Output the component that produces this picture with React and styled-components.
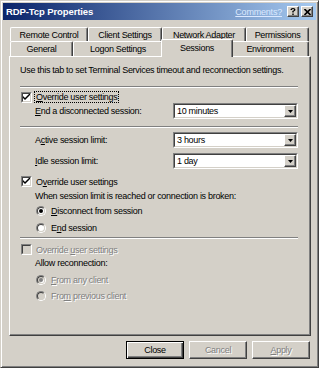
import React from 'react';
import styled, { createGlobalStyle, css } from 'styled-components';

const GlobalStyle = createGlobalStyle`
  html, body { margin: 0; padding: 0; background: #d4d0c8; }
  body { font-family: "Liberation Sans", Arial, sans-serif; }
`;

const raised = css`
  border: 1px solid;
  border-color: #fff #404040 #404040 #fff;
  box-shadow: inset -1px -1px 0 #808080;
`;

const Window = styled.div`
  width: 319px;
  height: 368px;
  box-sizing: border-box;
  background: #d4d0c8;
  border: 1px solid;
  border-color: #d4d0c8 #404040 #404040 #d4d0c8;
  box-shadow: inset 1px 1px 0 #fff, inset -1px -1px 0 #808080;
  padding: 2px;
  display: flex;
  flex-direction: column;
  font-size: 9px;
  letter-spacing: -0.3px;
  color: #000;
`;

const TitleBar = styled.div`
  height: 17px;
  display: flex;
  align-items: center;
  padding: 0 3px 0 3px;
  background: linear-gradient(to right, #0a246a, #a6caf0);
`;

const Title = styled.div`
  flex: 1;
  color: #fff;
  font-weight: bold;
  font-size: 9.5px;
  letter-spacing: -0.1px;
`;

const HelpLink = styled.span`
  color: #dbe9ff;
  text-decoration: underline;
  margin-right: 5px;
  letter-spacing: -0.2px;
`;

const CaptionButton = styled.div`
  ${raised};
  width: 12px;
  height: 11px;
  box-sizing: border-box;
  background: #d4d0c8;
  display: flex;
  align-items: center;
  justify-content: center;
  margin-left: ${p => p.gap || 0}px;
`;

const Body = styled.div`
  flex: 1;
  display: flex;
  flex-direction: column;
  padding: 7px 5px 0 6px;
`;

const TabRow = styled.div`
  display: flex;
  height: ${p => p.h}px;
  padding-left: 1px;
`;

const Tab = styled.div`
  position: relative;
  width: ${p => p.w}px;
  height: 100%;
  box-sizing: border-box;
  border-left: 1px solid #fff;
  border-top: 1px solid #fff;
  border-right: 1px solid #404040;
  box-shadow: inset -1px 0 0 #808080;
  border-radius: 2px 2px 0 0;
  background: #d4d0c8;
  display: flex;
  align-items: center;
  justify-content: center;
  ${p => p.active && css`
    width: ${p.w + 4}px;
    height: calc(100% + 3px);
    margin: -2px -2px -1px -2px;
    z-index: 2;
    padding-bottom: 2px;
  `}
`;

const Panel = styled.div`
  height: 280px;
  box-sizing: border-box;
  border: 1px solid;
  border-color: #fff #404040 #404040 #fff;
  box-shadow: inset -1px -1px 0 #808080;
  padding: 0 12px 0 10px;
  display: flex;
  flex-direction: column;
`;

const Row = styled.div`
  display: flex;
  align-items: center;
  height: ${p => p.h || 13}px;
  margin-top: ${p => p.mt || 0}px;
  padding-left: ${p => p.indent || 0}px;
  color: ${p => (p.disabled ? '#808080' : '#000')};
  text-shadow: ${p => (p.disabled ? '1px 1px 0 #fff' : 'none')};
  white-space: nowrap;
`;

const Separator = styled.div`
  height: 0;
  border-top: 1px solid #808080;
  border-bottom: 1px solid #fff;
  margin-top: ${p => p.mt || 0}px;
`;

const CheckBox = styled.span`
  width: 11px;
  height: 11px;
  box-sizing: border-box;
  border: 1px solid;
  border-color: #808080 #fff #fff #808080;
  display: flex;
  flex-shrink: 0;
  &::before {
    content: '';
    display: block;
  }
`;

const CheckWell = styled.span`
  flex: 1;
  border: 1px solid;
  border-color: #404040 #d4d0c8 #d4d0c8 #404040;
  background: ${p => (p.disabled ? '#d4d0c8' : '#fff')};
  display: flex;
  align-items: center;
  justify-content: center;
`;

const RadioRing = styled.span`
  width: 10px;
  height: 10px;
  box-sizing: border-box;
  border-radius: 50%;
  border: 1px solid;
  border-color: #808080 #fff #fff #808080;
  display: flex;
  flex-shrink: 0;
`;

const RadioWell = styled.span`
  flex: 1;
  border-radius: 50%;
  border: 1px solid;
  border-color: #404040 #d4d0c8 #d4d0c8 #404040;
  background: ${p => (p.disabled ? '#d4d0c8' : '#fff')};
  display: flex;
  align-items: center;
  justify-content: center;
`;

const Dot = styled.span`
  width: 4px;
  height: 4px;
  border-radius: 50%;
  background: ${p => (p.disabled ? '#808080' : '#000')};
  box-shadow: ${p => (p.disabled ? '1px 1px 0 #fff' : 'none')};
`;

const Label = styled.span`
  margin-left: ${p => p.gap || 3}px;
  padding: 0 1px;
  border: 1px dotted ${p => (p.focus ? '#000' : 'transparent')};
  line-height: 10px;
`;

const FieldLabel = styled.span`
  width: 138px;
  flex-shrink: 0;
`;

const Combo = styled.div`
  width: 125px;
  height: 16px;
  box-sizing: border-box;
  border: 1px solid;
  border-color: #808080 #fff #fff #808080;
  display: flex;
`;

const ComboInner = styled.div`
  flex: 1;
  border: 1px solid;
  border-color: #404040 #d4d0c8 #d4d0c8 #404040;
  background: #fff;
  display: flex;
  align-items: center;
  padding-left: 2px;
`;

const ComboText = styled.span`
  flex: 1;
`;

const DropButton = styled.div`
  ${raised};
  width: 12px;
  height: 100%;
  box-sizing: border-box;
  background: #d4d0c8;
  display: flex;
  align-items: center;
  justify-content: center;
`;

const ButtonBar = styled.div`
  display: flex;
  justify-content: flex-end;
  gap: 5px;
  margin-top: 5px;
  padding-right: 1px;
`;

const Button = styled.div`
  width: 58px;
  height: 18px;
  box-sizing: border-box;
  background: #d4d0c8;
  display: flex;
  align-items: center;
  justify-content: center;
  border: 1px solid;
  border-color: #fff #404040 #404040 #fff;
  box-shadow: inset -1px -1px 0 #808080;
  color: ${p => (p.disabled ? '#808080' : '#000')};
  text-shadow: ${p => (p.disabled ? '1px 1px 0 #fff' : 'none')};
  ${p => p.primary && css`
    border: 1px solid #000;
    box-shadow: inset 1px 1px 0 #fff, inset -1px -1px 0 #404040, inset -2px -2px 0 #808080;
  `}
`;

const Check = ({ disabled, checked }) => (
  <CheckBox>
    <CheckWell disabled={disabled}>
      {checked && (
        <svg width="7" height="7" viewBox="0 0 7 7">
          <path d="M0 2 L0 4 L2 6 L7 1 L7 -1 L2 4 Z" fill="#000" />
        </svg>
      )}
    </CheckWell>
  </CheckBox>
);

const Radio = ({ disabled, checked }) => (
  <RadioRing>
    <RadioWell disabled={disabled}>{checked && <Dot disabled={disabled} />}</RadioWell>
  </RadioRing>
);

const Dropdown = ({ value }) => (
  <Combo>
    <ComboInner>
      <ComboText>{value}</ComboText>
      <DropButton>
        <svg width="5" height="3" viewBox="0 0 5 3">
          <path d="M0 0 H5 L2.5 3 Z" fill="#000" />
        </svg>
      </DropButton>
    </ComboInner>
  </Combo>
);

const backTabs = [
  { label: 'Remote Control', w: 78 },
  { label: 'Client Settings', w: 74 },
  { label: 'Network Adapter', w: 84 },
  { label: 'Permissions', w: 63 },
];

const frontTabs = [
  { label: 'General', w: 63 },
  { label: 'Logon Settings', w: 90 },
  { label: 'Sessions', w: 68, active: true },
  { label: 'Environment', w: 78 },
];

export default function App() {
  return (
    <>
      <GlobalStyle />
      <Window>
        <TitleBar>
          <Title>RDP-Tcp Properties</Title>
          <HelpLink>Comments?</HelpLink>
          <CaptionButton>
            <svg width="6" height="7" viewBox="0 0 6 7">
              <path d="M0.5 1.5 Q0.5 0 3 0 Q5.5 0 5.5 1.8 Q5.5 3 3.7 3.4 V4.5 H2.3 V3 Q4 2.6 4 1.7 Q4 1.1 3 1.1 Q2 1.1 2 2 H0.5 Z M2.3 5.4 H3.7 V7 H2.3 Z" fill="#000" />
            </svg>
          </CaptionButton>
          <CaptionButton gap={2}>
            <svg width="7" height="6" viewBox="0 0 7 6">
              <path d="M0.5 0 L6.5 6 M6.5 0 L0.5 6" stroke="#000" strokeWidth="1.6" />
            </svg>
          </CaptionButton>
        </TitleBar>
        <Body>
          <TabRow h={14}>
            {backTabs.map(t => (
              <Tab key={t.label} w={t.w}>{t.label}</Tab>
            ))}
          </TabRow>
          <TabRow h={15}>
            {frontTabs.map(t => (
              <Tab key={t.label} w={t.w} active={t.active}>{t.label}</Tab>
            ))}
          </TabRow>
          <Panel>
            <Row mt={7} h={12}>Use this tab to set Terminal Services timeout and reconnection settings.</Row>
            <Separator mt={10} />
            <Row mt={3} h={12} indent={1}>
              <Check checked />
              <Label focus gap={2}><u>O</u>verride user settings</Label>
            </Row>
            <Row h={16} indent={15}>
              <FieldLabel><u>E</u>nd a disconnected session:</FieldLabel>
              <Dropdown value="10 minutes" />
            </Row>
            <Separator mt={7} />
            <Row mt={4} h={16} indent={15}>
              <FieldLabel>A<u>c</u>tive session limit:</FieldLabel>
              <Dropdown value="3 hours" />
            </Row>
            <Row mt={5} h={16} indent={15}>
              <FieldLabel><u>I</u>dle session limit:</FieldLabel>
              <Dropdown value="1 day" />
            </Row>
            <Row mt={6} indent={1}>
              <Check checked />
              <Label gap={2}>O<u>v</u>erride user settings</Label>
            </Row>
            <Row mt={1} indent={15}>When session limit is reached or connection is broken:</Row>
            <Row mt={2} h={14} indent={16}>
              <Radio checked />
              <Label gap={3}><u>D</u>isconnect from session</Label>
            </Row>
            <Row mt={3} h={14} indent={16}>
              <Radio />
              <Label gap={3}>E<u>n</u>d session</Label>
            </Row>
            <Separator mt={2} />
            <Row mt={4} indent={1} disabled>
              <Check disabled />
              <Label gap={2}>Override <u>u</u>ser settings</Label>
            </Row>
            <Row indent={15}>Allow reconnection:</Row>
            <Row mt={4} h={14} indent={16} disabled>
              <Radio checked disabled />
              <Label gap={3}><u>F</u>rom any client</Label>
            </Row>
            <Row mt={2} h={14} indent={16} disabled>
              <Radio disabled />
              <Label gap={3}>Fro<u>m</u> previous client</Label>
            </Row>
          </Panel>
          <ButtonBar>
            <Button primary>Close</Button>
            <Button disabled>Cancel</Button>
            <Button disabled><u>A</u>pply</Button>
          </ButtonBar>
        </Body>
      </Window>
    </>
  );
}
